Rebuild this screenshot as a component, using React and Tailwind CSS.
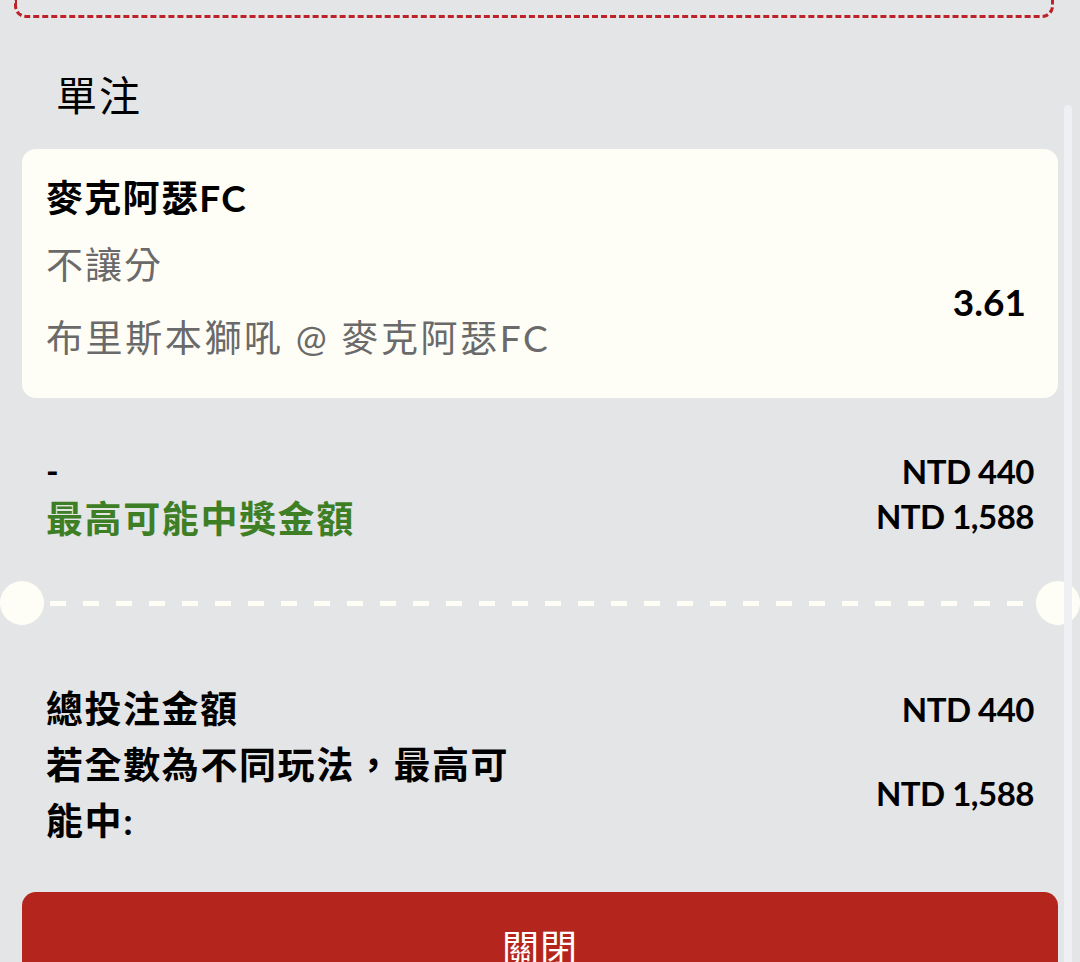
export default function App() {
  const font = { fontFamily: 'Lato, "Noto Sans CJK TC", sans-serif' }
  return (
    <div className="relative min-h-screen overflow-hidden bg-[#e4e5e7] text-black" style={font}>
      {/* bottom of the previous dashed box */}
      <div className="ml-[14px] h-[18px] w-[1040px] rounded-b-[12px] border-[3px] border-t-0 border-dashed border-[#bd2228]" />

      {/* scrollbar track */}
      <div className="absolute right-[8px] top-[105px] bottom-0 w-[8px] rounded-t-full bg-[#eff0f3]" />

      <h2 className="mt-[55px] px-[56px] text-[41px] leading-[46px] tracking-[2px] font-normal">單注</h2>

      <div className="mx-[22px] mt-[30px] flex h-[249px] w-[1036px] justify-between rounded-[14px] bg-[#fffef6] pl-[24px] pr-[32px] pt-[25px]">
        <div className="flex flex-col">
          <div className="text-[37px] font-bold leading-[48px] tracking-[1.3px]">麥克阿瑟FC</div>
          <div className="mt-[19px] text-[37px] leading-[48px] tracking-[2px] text-[#6a6a6a]">不讓分</div>
          <div className="mt-[25px] text-[37px] leading-[48px] tracking-[2.6px] text-[#6a6a6a]">布里斯本獅吼 @ 麥克阿瑟FC</div>
        </div>
        <div className="mt-[104px] text-[37px] font-bold leading-[48px]">3.61</div>
      </div>

      <div className="mt-[49px] px-[46px]">
        <div className="flex items-center justify-between leading-[48px]">
          <span className="text-[34px] font-bold">-</span>
          <span className="text-[33px] font-bold tracking-[-0.5px]">NTD 440</span>
        </div>
        <div className="flex items-center justify-between leading-[48px]">
          <span className="text-[37px] font-bold tracking-[1.6px] text-[#3e7f26]">最高可能中獎金額</span>
          <span className="-mt-[6px] text-[33px] font-bold tracking-[-0.5px]">NTD 1,588</span>
        </div>
      </div>

      <div className="mt-[38px] flex h-[44px] items-center">
        <div className="h-[44px] w-[44px] shrink-0 rounded-full bg-[#fffef6]" />
        <div className="mx-[6px] h-[5px] flex-1 bg-[repeating-linear-gradient(90deg,#fffef6_0_16px,transparent_16px_33px)]" />
        <div className="h-[44px] w-[44px] shrink-0 rounded-full bg-[#fffef6]" />
      </div>

      <div className="mt-[56px] px-[46px]">
        <div className="flex items-center justify-between leading-[56px]">
          <span className="text-[37px] font-bold tracking-[1.5px]">總投注金額</span>
          <span className="text-[33px] font-bold tracking-[-0.5px]">NTD 440</span>
        </div>
        <div className="flex items-center justify-between leading-[56px]">
          <span className="max-w-[480px] text-[37px] font-bold tracking-[1.6px]">若全數為不同玩法，最高可能中:</span>
          <span className="text-[33px] font-bold tracking-[-0.5px]">NTD 1,588</span>
        </div>
      </div>

      <button className="mx-[22px] mt-[43px] flex h-[112px] w-[1036px] items-center justify-center rounded-[14px] bg-[#b3251d] text-[37px] tracking-[1px] text-white">
        關閉
      </button>
    </div>
  )
}
